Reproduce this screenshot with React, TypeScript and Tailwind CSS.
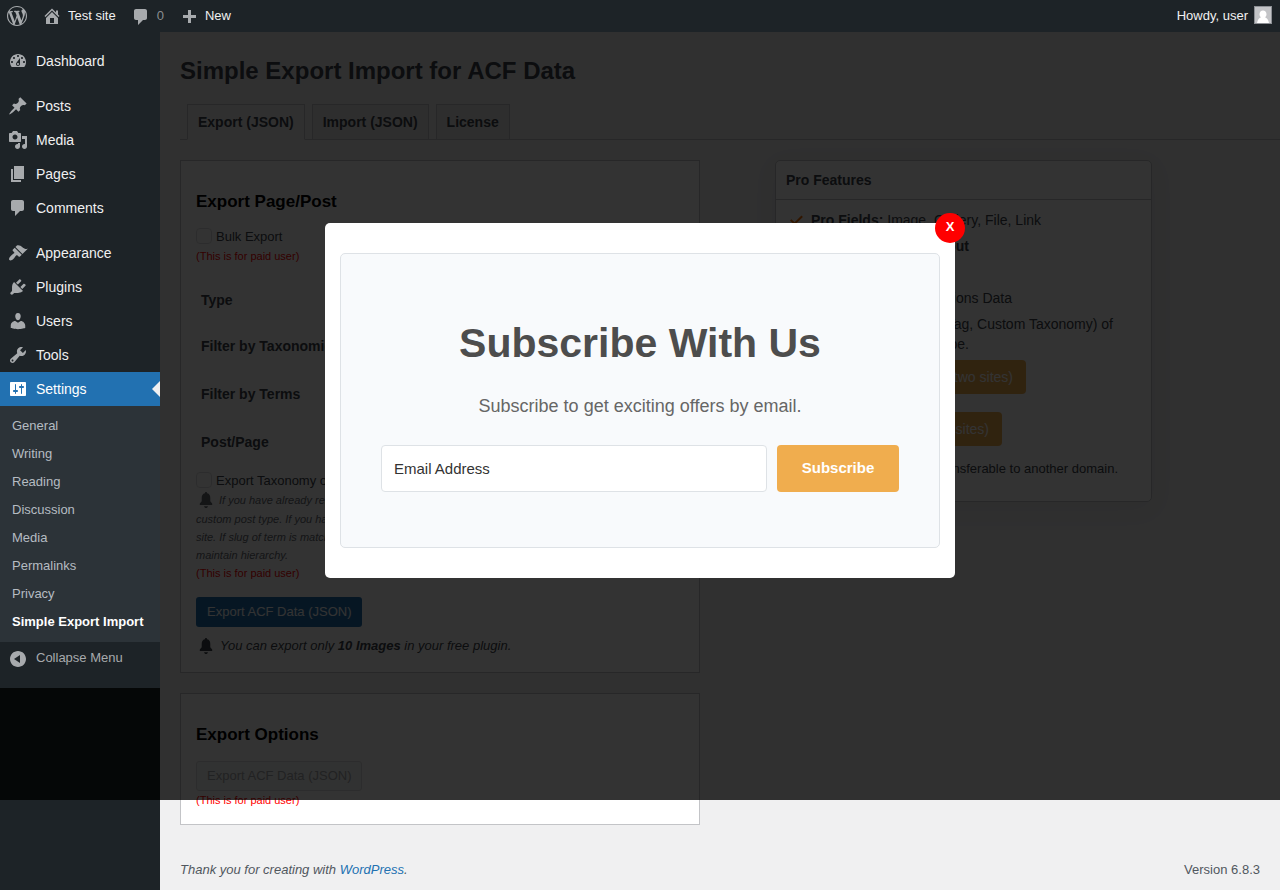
import type { ReactNode } from "react";

const icons = {
  wordpress:
    "M20 10c0-5.51-4.49-10-10-10C4.48 0 0 4.49 0 10c0 5.52 4.48 10 10 10 5.51 0 10-4.48 10-10zM7.78 15.37L4.37 6.22c.55-.02 1.17-.08 1.17-.08.5-.06.44-1.13-.06-1.11 0 0-1.45.11-2.37.11-.18 0-.37 0-.58-.01C4.12 2.69 6.87 1.11 10 1.11c2.33 0 4.45.87 6.05 2.34-.68-.11-1.65.39-1.65 1.58 0 .74.45 1.36.9 2.1.35.61.55 1.36.55 2.46 0 1.49-1.4 5-1.4 5l-3.03-8.37c.54-.02.82-.17.82-.17.5-.05.44-1.25-.06-1.22 0 0-1.44.12-2.38.12-.87 0-2.33-.12-2.33-.12-.5-.03-.56 1.2-.06 1.22l.92.08 1.26 3.41zM17.41 10c.24-.64.74-1.87.43-4.25.7 1.29 1.05 2.71 1.05 4.25 0 3.29-1.73 6.24-4.4 7.78.97-2.59 1.94-5.2 2.92-7.78zM6.1 18.09C3.12 16.65 1.11 13.53 1.11 10c0-1.3.23-2.48.72-3.59C3.25 10.3 4.67 14.2 6.1 18.09zm4.03-6.63l2.58 6.98c-.86.29-1.76.45-2.71.45-.79 0-1.57-.11-2.29-.33.81-2.38 1.62-4.74 2.42-7.1z",
  home: "M16 8.5l1.53 1.53-1.06 1.06L10 4.6l-6.47 6.49-1.06-1.06L10 2.5l4 4v-2h2v4zm-6-2.46l6 5.99V18H4v-5.97zM12 17v-5H8v5h4z",
  comments:
    "M5 2h9c1.1 0 2 .9 2 2v7c0 1.1-.9 2-2 2h-2l-5 5v-5H5c-1.1 0-2-.9-2-2V4c0-1.1.9-2 2-2z",
  plus: "M17 7v3h-5v5H9v-5H4V7h5V2h3v5h5z",
  dashboard:
    "M3.76 16h12.48c1.1-1.37 1.76-3.11 1.76-5 0-4.42-3.58-8-8-8s-8 3.58-8 8c0 1.89.66 3.63 1.76 5zM10 4c.55 0 1 .45 1 1s-.45 1-1 1-1-.45-1-1 .45-1 1-1zM6 6c.55 0 1 .45 1 1s-.45 1-1 1-1-.45-1-1 .45-1 1-1zm8 0c.55 0 1 .45 1 1s-.45 1-1 1-1-.45-1-1 .45-1 1-1zm-5.37 5.55L12 7v6c0 1.1-.9 2-2 2s-2-.9-2-2c0-.57.24-1.08.63-1.45zM4 10c.55 0 1 .45 1 1s-.45 1-1 1-1-.45-1-1 .45-1 1-1zm12 0c.55 0 1 .45 1 1s-.45 1-1 1-1-.45-1-1 .45-1 1-1zm-5 3c0-.55-.45-1-1-1s-1 .45-1 1 .45 1 1 1 1-.45 1-1z",
  posts:
    "M10.44 3.02l1.82-1.82 6.36 6.35-1.83 1.82c-1.05-.68-2.48-.57-3.41.36l-.75.75c-.92.93-1.04 2.35-.35 3.41l-1.83 1.82-2.41-2.41-2.8 2.79c-.42.42-3.38 2.71-3.8 2.29s1.86-3.39 2.28-3.81l2.79-2.79L4.1 9.36l1.83-1.82c1.05.69 2.48.57 3.4-.36l.75-.75c.93-.92 1.05-2.35.36-3.41z",
  media:
    "M13 11V4c0-.55-.45-1-1-1h-1.67L9 1H5L3.67 3H2c-.55 0-1 .45-1 1v7c0 .55.45 1 1 1h10c.55 0 1-.45 1-1zM7 4.5c1.38 0 2.5 1.12 2.5 2.5S8.38 9.5 7 9.5 4.5 8.38 4.5 7 5.62 4.5 7 4.5zM14 6h5v10.5c0 1.38-1.12 2.5-2.5 2.5S14 17.88 14 16.5s1.12-2.5 2.5-2.5c.17 0 .34.02.5.05V9h-3V6zm-4 8.05V13h2v3.5c0 1.38-1.12 2.5-2.5 2.5S7 17.88 7 16.5 8.12 14 9.5 14c.17 0 .34.02.5.05z",
  pages: "M6 15V2h10v13H6zm-1 1h8v2H3V5h2v11z",
  appearance:
    "M14.48 11.06L7.41 3.99l1.5-1.5c.5-.56 2.3-.47 3.51.32 1.21.8 1.43 1.28 2.91 2.1 1.18.64 2.45 1.26 4.45.85zm-.71.71L6.7 4.7 4.93 6.47c-.39.39-.39 1.02 0 1.41l1.06 1.06c.39.39.39 1.03 0 1.42-.6.6-1.43 1.11-2.21 1.69-.35.26-.7.53-1.01.84C1.43 14.23.4 16.08 1.4 17.07c.99 1 2.84-.03 4.18-1.36.31-.31.58-.66.85-1.02.57-.78 1.08-1.61 1.69-2.21.39-.39 1.02-.39 1.41 0l1.06 1.06c.39.39 1.02.39 1.41 0z",
  plugins:
    "M13.11 4.36L9.87 7.6 8 5.73l3.24-3.24c.35-.34 1.05-.2 1.56.32.52.51.66 1.21.31 1.55zm-8 1.77l.91-1.12 9.01 9.01-1.19.84c-.71.71-2.63 1.16-3.82 1.16H6.14L4.9 17.26c-.59.59-1.54.59-2.12 0-.59-.58-.59-1.53 0-2.12l1.24-1.24v-3.88c0-1.13.4-3.19 1.09-3.89zm7.26 3.97l3.24-3.24c.34-.35 1.04-.21 1.55.31.52.51.66 1.21.31 1.55l-3.24 3.25z",
  users:
    "M10 9.25c-2.27 0-2.73-3.44-2.73-3.44C7 4.02 7.82 2 9.97 2c2.16 0 2.98 2.02 2.71 3.81 0 0-.41 3.44-2.68 3.44zm0 2.57L12.72 10c2.39 0 4.52 2.33 4.52 4.53v2.49s-3.65 1.13-7.24 1.13c-3.65 0-7.24-1.13-7.24-1.13v-2.49c0-2.25 1.94-4.48 4.47-4.48z",
  tools:
    "M16.68 9.77c-1.34 1.34-3.3 1.67-4.95.99l-5.41 6.52c-.99.99-2.59.99-3.58 0s-.99-2.59 0-3.57l6.52-5.42c-.68-1.65-.35-3.61.99-4.95 1.28-1.28 3.12-1.62 4.72-1.06l-2.89 2.89 2.82 2.82 2.86-2.87c.53 1.58.18 3.39-1.08 4.65zM3.81 16.21c.4.39 1.04.39 1.43 0 .4-.4.4-1.04 0-1.43-.39-.4-1.03-.4-1.43 0-.39.39-.39 1.03 0 1.43z",
  settings:
    "M18 16V4c0-.55-.45-1-1-1H3c-.55 0-1 .45-1 1v12c0 .55.45 1 1 1h14c.55 0 1-.45 1-1zM8 11h1c.55 0 1 .45 1 1s-.45 1-1 1H8v1.5c0 .28-.22.5-.5.5s-.5-.22-.5-.5V13H6c-.55 0-1-.45-1-1s.45-1 1-1h1V5.5c0-.28.22-.5.5-.5s.5.22.5.5V11zm5-2h-1c-.55 0-1-.45-1-1s.45-1 1-1h1V5.5c0-.28.22-.5.5-.5s.5.22.5.5V7h1c.55 0 1 .45 1 1s-.45 1-1 1h-1v5.5c0 .28-.22.5-.5.5s-.5-.22-.5-.5V9z",
  collapse:
    "M10 2c4.42 0 8 3.58 8 8s-3.58 8-8 8-8-3.58-8-8 3.58-8 8-8zM12 14V6l-6 4z",
  bell: "M8.9 3.2C8.9 2.5 9.4 2 10 2s1.100.5 1.100 1.200C13.500 3.700 14.300 5.600 14.300 8v3.200L16.200 13.600V15H3.800v-1.400L5.700 11.200V8c0-2.400.8-4.300 3.200-4.800zM8 16.200h4c-.3 1.100-1 1.800-2 1.800s-1.700-.7-2-1.800z",
  yes: "M15.5 5.500L16.900 6.900 8.600 15 4 10.600 5.400 9.200 8.600 12.200z",
};

type IconName = keyof typeof icons;

function Icon({ name, className = "" }: { name: IconName; className?: string }) {
  return (
    <svg
      viewBox="0 0 20 20"
      aria-hidden="true"
      fill="currentColor"
      fillRule={name === "collapse" ? "evenodd" : "nonzero"}
      className={`size-5 shrink-0 ${className}`}
    >
      <path d={icons[name]} />
    </svg>
  );
}

function AdminBar() {
  return (
    <header className="relative z-20 flex h-8 items-center justify-between bg-[#1d2327] pr-2 pl-[7px] text-[13px] text-[#f0f0f1]">
      <div className="flex items-center">
        <a href="#wordpress" aria-label="About WordPress" className="mr-[15px] text-[#a7aaad]">
          <Icon name="wordpress" />
        </a>
        <a href="#site" className="mr-[15px] flex items-center gap-[6px]">
          <Icon name="home" className="text-[#a7aaad]" />
          Test site
        </a>
        <a href="#comments" className="mr-[15px] flex items-center gap-[6px] text-[#a7aaad]/80">
          <Icon name="comments" className="mt-0.5 text-[#a7aaad]" />0
        </a>
        <a href="#new" className="flex items-center gap-[6px]">
          <Icon name="plus" className="mt-1 text-[#a7aaad]" />
          New
        </a>
      </div>
      <a href="#profile" className="flex items-center gap-[6px]">
        Howdy, user
        <svg viewBox="0 0 18 18" aria-hidden="true" className="-mt-0.5 size-[18px]">
          <rect width="18" height="18" fill="#8c8f94" />
          <rect x="1" y="1" width="16" height="16" fill="#c3c4c7" />
          <path
            d="M9 4.500c2 0 3.500 1.500 3.500 3.700 0 1.300-.6 2.500-1.500 3.100 1.800.7 3.300 2.200 4 5.700H3c.7-3.500 2.200-5 4-5.700-.9-.6-1.500-1.800-1.500-3.100 0-2.200 1.500-3.700 3.500-3.700z"
            fill="#fff"
          />
        </svg>
      </a>
    </header>
  );
}

function MenuItem({ icon, label }: { icon: IconName; label: string }) {
  return (
    <li>
      <a href={`#${icon}`} className="flex h-[34px] items-center gap-2 pl-2 text-sm text-[#f0f0f1]">
        <Icon name={icon} className="text-[#a7aaad]" />
        {label}
      </a>
    </li>
  );
}

const submenu = ["General", "Writing", "Reading", "Discussion", "Media", "Permalinks", "Privacy"];

function Sidebar() {
  return (
    <aside className="w-40 shrink-0 bg-[#1d2327]">
      <nav aria-label="Main menu" className="relative z-20 bg-[#1d2327] py-3">
        <ul>
          <MenuItem icon="dashboard" label="Dashboard" />
        </ul>
        <ul className="mt-[11px]">
          <MenuItem icon="posts" label="Posts" />
          <MenuItem icon="media" label="Media" />
          <MenuItem icon="pages" label="Pages" />
          <MenuItem icon="comments" label="Comments" />
        </ul>
        <ul className="mt-[11px]">
          <MenuItem icon="appearance" label="Appearance" />
          <MenuItem icon="plugins" label="Plugins" />
          <MenuItem icon="users" label="Users" />
          <MenuItem icon="tools" label="Tools" />
          <li>
            <a
              href="#settings"
              className="relative flex h-[34px] items-center gap-2 bg-[#2271b1] pl-2 text-sm text-white"
            >
              <Icon name="settings" />
              Settings
              <span className="absolute top-[9px] right-0 size-0 border-y-8 border-r-8 border-y-transparent border-r-[#f0f0f1]" />
            </a>
            <ul className="bg-[#2c3338] py-1.5 text-[13px] text-[#b5bcc2]">
              {submenu.map((label) => (
                <li key={label}>
                  <a href={`#${label}`} className="block px-3 leading-7">
                    {label}
                  </a>
                </li>
              ))}
              <li>
                <a href="#export" className="block px-3 leading-7 font-bold whitespace-nowrap text-white">
                  Simple Export Import
                </a>
              </li>
            </ul>
          </li>
        </ul>
        <button type="button" className="flex h-[34px] w-full items-center gap-2 pl-2 text-[13px] text-[#a7aaad]">
          <Icon name="collapse" />
          <span className="-mt-0.5">Collapse Menu</span>
        </button>
      </nav>
    </aside>
  );
}

function PaidNote() {
  return <p className="text-[11px] leading-[18px] text-[#ff0000]">(This is for paid user)</p>;
}

function CheckRow({ id, label }: { id: string; label: string }) {
  return (
    <div className="flex items-start gap-1 text-[13px] leading-[18px]">
      <input
        id={id}
        type="checkbox"
        disabled
        className="size-4 appearance-none rounded border border-[#dcdcde] bg-white"
      />
      <label htmlFor={id} className="whitespace-nowrap">
        {label}
      </label>
    </div>
  );
}

function ExportPanel() {
  return (
    <section className="border border-[#c3c4c7] bg-white px-[15px] pt-[31px] pb-4">
      <h2 className="text-[17px] leading-5 font-bold text-black">Export Page/Post</h2>
      <div className="mt-4">
        <CheckRow id="bulk" label="Bulk Export" />
        <div className="mt-px">
          <PaidNote />
        </div>
      </div>
      <div className="mt-[13px] mb-[6px] flex flex-col text-sm font-bold">
        <p className="flex h-11 items-center px-[5px]">Type</p>
        <p className="flex h-12 items-center px-[5px]">Filter by Taxonomies</p>
        <p className="flex h-12 items-center px-[5px]">Filter by Terms</p>
        <p className="flex h-12 items-center px-[5px]">Post/Page</p>
      </div>
      <CheckRow id="taxonomy" label="Export Taxonomy of Post" />
      <div className="text-[11px] leading-[18px] whitespace-nowrap text-[#646970] italic">
        <p className="flex h-5 items-center gap-[3px]">
          <Icon name="bell" />
          If you have already related
        </p>
        <p>custom post type. If you have</p>
        <p>site. If slug of term is matched</p>
        <p>maintain hierarchy.</p>
      </div>
      <PaidNote />
      <button type="button" className="mt-[15px] h-[30px] rounded-[3px] bg-[#2271b1] px-[11px] text-[13px] text-white">
        Export ACF Data (JSON)
      </button>
      <p className="mt-[9px] flex items-center gap-1 text-[13px] leading-5 italic">
        <Icon name="bell" />
        <span>
          You can export only <strong>10 Images</strong> in your free plugin.
        </span>
      </p>
    </section>
  );
}

function OptionsPanel() {
  return (
    <section className="mt-5 border border-[#c3c4c7] bg-white px-[15px] pt-[31px] pb-[15px]">
      <h2 className="text-[17px] leading-5 font-bold text-black">Export Options</h2>
      <button
        type="button"
        disabled
        className="mt-4 block h-[30px] rounded-[3px] border border-[#dcdcde] bg-[#f6f7f7] px-2.5 text-[13px] text-[#a7aaad]"
      >
        Export ACF Data (JSON)
      </button>
      <PaidNote />
    </section>
  );
}

function Feature({ children }: { children: ReactNode }) {
  return (
    <li className="flex gap-[5px]">
      <Icon name="yes" className="text-[#f56e00]" />
      <div>{children}</div>
    </li>
  );
}

function ProPanel() {
  return (
    <section className="w-[377px] rounded-[5px] border border-[#c3c4c7] bg-white pb-[22px] shadow-[0_6px_30px_10px_rgba(0,0,0,0.05)]">
      <h2 className="border-b border-[#c3c4c7] px-2.5 text-sm leading-[38px] font-bold">Pro Features</h2>
      <div className="px-2.5 pt-2.5">
        <ul className="flex flex-col gap-1.5 text-sm leading-5">
          <Feature>
            <strong>Pro Fields:</strong> Image, Gallery, File, Link
          </Feature>
          <Feature>
            <p className="w-[158px] text-right font-bold">Flexible Layout</p>
          </Feature>
          <Feature>
            <strong>Bulk Export</strong>
          </Feature>
          <Feature>
            <p className="w-[201px] text-right">Export/Import Options Data</p>
          </Feature>
          <Feature>
            <p className="w-[302px] text-right whitespace-nowrap">Taxonomy (Category, Tag, Custom Taxonomy) of</p>
            <p className="w-[158px] text-right">a custom post type.</p>
          </Feature>
        </ul>
        <div className="mt-1.5 flex flex-col items-start gap-[18px] text-sm">
          <button type="button" className="h-[34px] w-60 rounded bg-[#f0ad4e] px-[13px] text-right text-white">
            Buy License (two sites)
          </button>
          <button type="button" className="h-[34px] w-[216px] rounded bg-[#f0ad4e] px-[13px] text-right text-white">
            Buy License (ten sites)
          </button>
        </div>
        <p className="mt-[13px] w-[332px] text-right text-[13px] leading-5">
          License key is not transferable to another domain.
        </p>
      </div>
    </section>
  );
}

function SubscribeDialog() {
  return (
    <div className="absolute inset-x-0 top-0 z-10 flex h-[800px] items-center justify-center bg-black/80">
      <div
        role="dialog"
        aria-labelledby="subscribe-title"
        className="relative w-[630px] rounded-[5px] bg-white px-[15px] py-[30px]"
      >
        <button
          type="button"
          aria-label="Close"
          className="absolute -top-2.5 -right-2.5 size-[30px] rounded-full bg-[#ff0000] pb-px text-[13px] font-bold text-white"
        >
          X
        </button>
        <form className="rounded-[5px] border border-[#dee2e6] bg-[#f8fafc] px-10 pt-[60px] pb-[55px] text-center">
          <h2 id="subscribe-title" className="text-[41px] leading-[58px] font-bold text-[#4d4d4d]">
            Subscribe With Us
          </h2>
          <p className="mt-5 text-lg leading-7 text-[#666]">Subscribe to get exciting offers by email.</p>
          <div className="mt-[25px] flex gap-2.5">
            <input
              type="email"
              aria-label="Email Address"
              placeholder="Email Address"
              className="h-[47px] min-w-0 flex-1 rounded border border-[#dee2e6] bg-white px-3 text-[15px] text-[#333] placeholder:text-[#333]"
            />
            <button
              type="button"
              className="h-[47px] w-[122px] rounded bg-[#f0ad4e] pt-px text-[15px] font-bold text-white"
            >
              Subscribe
            </button>
          </div>
        </form>
      </div>
    </div>
  );
}

export default function App() {
  return (
    <div className="relative flex min-h-screen flex-col bg-[#f0f0f1] font-['Liberation_Sans',Arial,sans-serif] text-[#3c434a]">
      <AdminBar />
      <div className="flex flex-1">
        <Sidebar />
        <div className="flex min-w-0 flex-1 flex-col pl-5">
          <main className="pt-5">
            <h1 className="text-2xl leading-[38px] font-bold">Simple Export Import for ACF Data</h1>
            <nav
              aria-label="Sections"
              className="mt-3.5 flex gap-[7px] border-b border-[#c3c4c7] pl-[7px] text-sm leading-6 font-bold"
            >
              <a href="#export-tab" className="-mb-px border border-[#c3c4c7] border-b-[#f0f0f1] px-2.5 py-[5px]">
                Export (JSON)
              </a>
              <a href="#import-tab" className="border border-b-0 border-[#c3c4c7] bg-[#e5e5e5] px-2.5 py-[5px]">
                Import (JSON)
              </a>
              <a href="#license-tab" className="border border-b-0 border-[#c3c4c7] bg-[#e5e5e5] px-2.5 py-[5px]">
                License
              </a>
            </nav>
            <div className="mt-5 flex items-start gap-[75px]">
              <div className="w-[520px] shrink-0">
                <ExportPanel />
                <OptionsPanel />
              </div>
              <ProPanel />
            </div>
          </main>
          <footer className="mt-auto flex justify-between pr-5 pb-2.5 text-[13px] leading-5 text-[#50575e]">
            <p className="italic">
              Thank you for creating with{" "}
              <a href="#wordpress" className="text-[#2271b1]">
                WordPress
              </a>
              .
            </p>
            <p>Version 6.8.3</p>
          </footer>
        </div>
      </div>
      <SubscribeDialog />
    </div>
  );
}
